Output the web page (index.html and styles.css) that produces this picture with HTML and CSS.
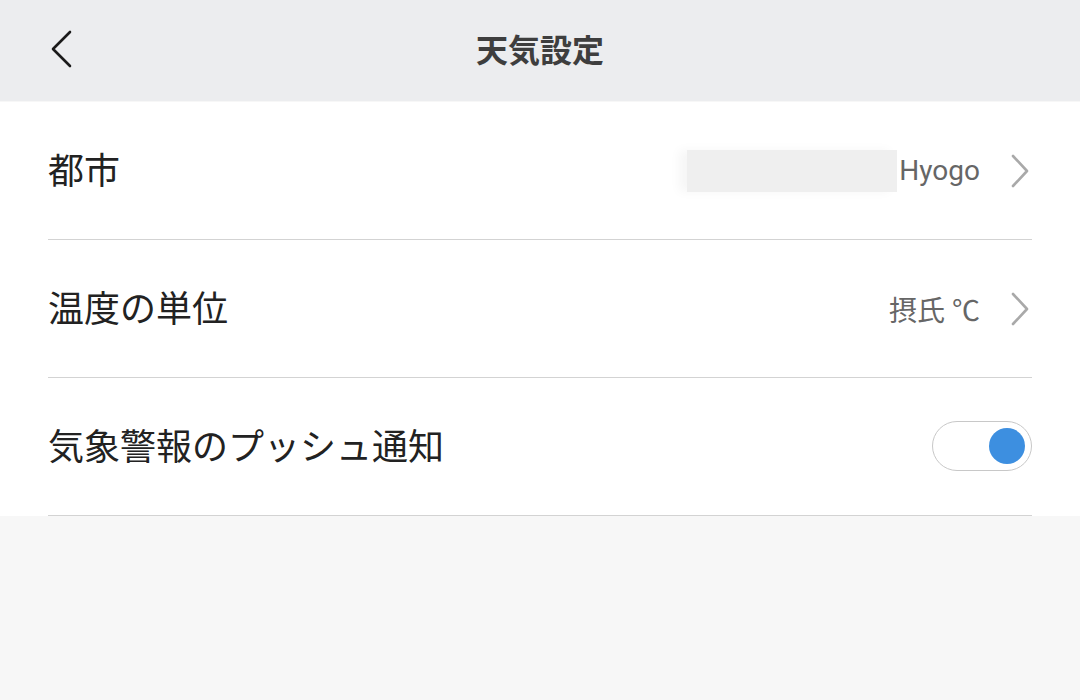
FILE: index.html
```html
<!DOCTYPE html>
<html lang="ja">
<head>
<meta charset="utf-8">
<link rel="stylesheet" href="styles.css">
</head>
<body>
<div class="page">
  <header class="topbar">
    <button class="back" aria-label="戻る">
      <svg width="26" height="40" viewBox="0 0 26 40"><path d="M22 3 L5 20 L22 37" fill="none" stroke="#1a1a1a" stroke-width="2.6" stroke-linecap="round" stroke-linejoin="round"/></svg>
    </button>
    <h1 class="title">天気設定</h1>
    <div class="spacer"></div>
  </header>
  <section class="list">
    <div class="row">
      <span class="label">都市</span>
      <span class="value"><span class="blur"></span><span class="vtext">Hyogo</span></span>
      <svg class="chev" width="20" height="34" viewBox="0 0 20 34"><path d="M3 2 L17 17 L3 32" fill="none" stroke="#a9a9a9" stroke-width="2.6" stroke-linecap="round" stroke-linejoin="round"/></svg>
    </div>
    <div class="row">
      <span class="label">温度の単位</span>
      <span class="value"><span class="vtext">摂氏 ℃</span></span>
      <svg class="chev" width="20" height="34" viewBox="0 0 20 34"><path d="M3 2 L17 17 L3 32" fill="none" stroke="#a9a9a9" stroke-width="2.6" stroke-linecap="round" stroke-linejoin="round"/></svg>
    </div>
    <div class="row">
      <span class="label">気象警報のプッシュ通知</span>
      <span class="toggle"><span class="knob"></span></span>
    </div>
  </section>
</div>
</body>
</html>
```
FILE: styles.css
```css
html, body {
  margin: 0;
  padding: 0;
}
body {
  background: #f7f7f7;
  font-family: "Noto Sans CJK JP", "Roboto", sans-serif;
  width: 1080px;
  height: 700px;
  overflow: hidden;
}
.topbar {
  height: 101px;
  background: #ecedef;
  display: flex;
  align-items: center;
  padding: 0 48px;
  box-sizing: border-box;
}
.back {
  width: 60px;
  border: 0;
  background: none;
  padding: 0;
  display: flex;
  align-items: center;
  margin-top: -4px;
}
.title {
  flex: 1;
  text-align: center;
  margin: 0;
  font-size: 32px;
  font-weight: 700;
  color: #3e3e3e;
  margin-top: -6px;
}
.spacer {
  width: 60px;
}
.list {
  background: #fff;
  margin-top: 1px;
  padding: 0 48px;
}
.row {
  display: flex;
  align-items: center;
  border-bottom: 1px solid #d3d3d3;
  box-sizing: border-box;
  height: 138px;
}
.label {
  flex: 1;
  font-size: 36px;
  color: #222;
  margin-top: -5px;
}
.value {
  display: flex;
  align-items: center;
  font-family: "Roboto", "Noto Sans CJK JP", sans-serif;
  font-size: 28px;
  color: #666;
}
.blur {
  width: 210px;
  height: 42px;
  background: #efefef;
  box-shadow: -8px 0 10px #f6f6f6;
}
.vtext {
  margin-left: 2px;
}
.chev {
  margin-left: 30px;
  margin-right: 2px;
}
.toggle {
  width: 100px;
  height: 50px;
  border: 1px solid #c8c8c8;
  border-radius: 26px;
  box-sizing: border-box;
  display: flex;
  align-items: center;
  justify-content: flex-end;
  padding-right: 6px;
  margin-top: -1px;
}
.knob {
  width: 36px;
  height: 36px;
  border-radius: 50%;
  background: #3d8fe0;
}
```
